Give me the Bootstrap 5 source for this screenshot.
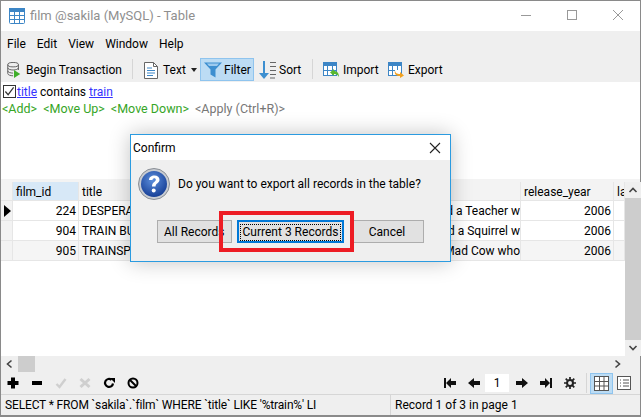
<!DOCTYPE html>
<html lang="en">
<head>
<meta charset="utf-8">
<title>film @sakila (MySQL) - Table</title>
<link href="https://cdn.jsdelivr.net/npm/bootstrap@5.3.0/dist/css/bootstrap.min.css" rel="stylesheet">
<style>
html,body{height:100%;}
body{font-family:Roboto,"Noto Sans",sans-serif;font-size:12px;line-height:16px;color:#000;background:#fff;overflow:hidden;}
.win{width:641px;height:417px;border:solid #8a8a8a;border-width:1px 1px 2px 1px;position:relative;}
.titlebar{height:30px;padding-left:8px;color:#8f8f8f;font-size:13px;flex:none;}
.ttl{margin-left:5px;}
.wbtn{width:46px;height:30px;padding:0 0 2px 2px;}
.chrome{background:#efefef;flex:none;}
.menubar{height:25px;padding-left:6px;gap:11px;padding-top:1px;}
.tbar{height:26px;}
.tb{height:23px;border:1px solid transparent;white-space:nowrap;flex:none;}
.tbar .tb{padding-top:2px;}
.tb.on{background:#bcdcf4;border-color:#8fc4ee;}
.vsep{width:1px;height:20px;background:#d6d6d6;flex:none;}
.t-begin{margin-left:4px;width:120px;gap:4px;}
.sep1{margin-left:7px;}
.t-text{margin-left:10px;width:57px;gap:5px;}
.caret-ic{margin-left:auto;margin-right:2px;}
.tbar .t-filter{width:54px;gap:2px;padding-left:3px;}
.tbar .t-sort{width:52px;gap:2px;padding-left:4px;}
.sep2{margin-left:6px;}
.t-import{margin-left:9px;width:65px;gap:4px;}
.t-export{margin-left:0;gap:4px;}
.i16{width:16px;height:16px;display:block;flex:none;}
.i14t{width:14px;height:17px;display:block;flex:none;}
.i18{width:18px;height:18px;display:block;flex:none;}
.filt{height:97px;flex:none;}
.chk{width:13px;height:13px;border:1px solid #333;background:#fff;margin:0 1px 0 2px;flex:none;}
.fl{height:17px;}
.fl1{height:18px;padding-top:1px;}
.fl2{gap:6px;padding-left:1px;padding-top:1px;font-size:12.5px;}
.lnk{color:#3333ff;text-decoration:underline;}
.grn{color:#36a526;}
.gry{color:#777;}
.gridwrap{height:177px;flex:none;}
.gridtop{height:3px;background:#f3f3f3;flex:none;}
.gridbody{flex:1 1 auto;min-height:0;}
.gridmain{width:624px;background:#fff;flex:none;}
.datagrid{display:grid;grid-template-columns:12px 66px 190px 252px 93px 11px;grid-template-rows:19px 20px 20px 20px;}
.datagrid > div{border-right:1px solid #e6e6e6;border-bottom:1px solid #e6e6e6;padding:0 3px;white-space:nowrap;overflow:hidden;display:flex;align-items:center;}
.datagrid .rh{background:#f3f3f3;padding:0 0 0 3px;}
.datagrid .hd{background:#f3f3f3;padding-top:1px;}
.datagrid .hd.act{background:#d7e8f7;}
.datagrid .num{justify-content:flex-end;padding-right:2px;}
.datagrid .rt{justify-content:flex-end;padding-right:0;}
.datagrid .alt{background:#f5f5f5;}
.arrow{width:0;height:0;border-left:7px solid #000;border-top:6px solid transparent;border-bottom:6px solid transparent;}
.vscroll{width:16px;background:#efefef;flex:none;}
.vbtn{height:16px;flex:none;}
.vthumb{background:#cdcdcd;height:142px;flex:none;}
.hscroll{height:16px;background:#efefef;flex:none;}
.hthumb{width:17px;height:16px;background:#cdcdcd;margin-left:1px;flex:none;}
.hright{width:14px;flex:none;}
.btools{height:22px;padding-left:5px;padding-right:9px;}
.ltools{gap:10px;}
.rtools{gap:12px;}
.ico{width:14px;height:14px;display:block;flex:none;}
.ico12{width:12px;height:14px;display:block;flex:none;}
.tighta{margin-right:-7px;}
.tightb{margin-right:-5px;}
.sepg{margin-left:-2px;}
.pagebox{width:24px;height:18px;background:#fff;text-align:center;line-height:18px;flex:none;}
.viewbtns{gap:4px;margin-left:-9px;}
.t-grid{width:23px;height:21px;}
.i15{width:15px;height:15px;display:block;flex:none;}
.status{height:21px;border-top:1px solid #d6d6d6;background:#efefef;flex:none;}
.sqlcell{width:390px;padding-left:4px;border-right:1px solid #d6d6d6;white-space:nowrap;overflow:hidden;height:20px;line-height:20px;letter-spacing:-.15px;}
.reccell{padding-left:4px;line-height:20px;}
.dlg{position:absolute;left:129px;top:133px;width:321px;height:128px;background:#efefef;border:1px solid #2b9be0;box-shadow:0 0 20px rgba(0,0,0,.24);}
.dlgtop{height:25px;background:#fff;padding:0 0 0 2px;}
.dlgx{margin-right:9px;}
.dlgq{padding:8px 0 0 7px;gap:8px;height:66px;}
.qicon{flex:none;}
.qtext{padding-top:8px;}
.dbtn{position:absolute;top:85px;height:23px;background:#e1e1e1;border:1px solid #adadad;text-align:center;line-height:20px;padding:0;color:#000;white-space:nowrap;}
.b-all{left:26px;width:75px;overflow:hidden;text-align:left;padding-left:6px;}
.b-cur{left:106px;width:107px;border:2px solid #0078d7;}
.b-cur span{display:block;margin:0 1px;border:1px dotted #000;height:17px;line-height:15px;margin-top:1px;}
.b-can{left:219px;width:74px;}
.redbox{position:absolute;left:88px;top:76px;width:135px;height:41px;border:4px solid #ed1c24;}
</style>
</head>
<body>
<div class="win d-flex flex-column">
  <div class="titlebar d-flex align-items-center">
    <svg class="i16" viewBox="0 0 16 16"><rect x=".5" y=".5" width="15" height="15" rx="1" fill="#fff" stroke="#3d86c6"/><rect width="16" height="4" fill="#3d86c6"/><path d="M5.500 4v12M10.500 4v12M0 7.500h16M0 11.500h16" stroke="#3d86c6" fill="none"/></svg>
    <span class="ttl flex-grow-1">film @sakila (MySQL) - Table</span>
    <div class="d-flex">
      <div class="wbtn d-flex align-items-center justify-content-center"><svg width="12" height="12" viewBox="0 0 12 12"><path d="M1 6.500h10" stroke="#999"/></svg></div>
      <div class="wbtn d-flex align-items-center justify-content-center"><svg width="12" height="12" viewBox="0 0 12 12"><rect x="1.500" y="1.500" width="9" height="9" fill="none" stroke="#999"/></svg></div>
      <div class="wbtn d-flex align-items-center justify-content-center"><svg width="12" height="12" viewBox="0 0 12 12"><path d="M1 1l10 10M11 1L1 11" stroke="#999"/></svg></div>
    </div>
  </div>
  <div class="chrome">
    <div class="menubar d-flex align-items-center"><span>File</span><span>Edit</span><span>View</span><span>Window</span><span>Help</span></div>
    <div class="tbar d-flex align-items-center">
      <div class="tb t-begin d-flex align-items-center">
        <svg class="i16" viewBox="0 0 16 18"><ellipse cx="7" cy="3" rx="6" ry="2.500" fill="#eee" stroke="#555"/><path d="M1 3v10c0 1.500 3 2.500 6 2.500M13 3v6M1 6.500c0 1.500 3 2.500 6 2.500s6-1 6-2.500M1 10c0 1.500 3 2.500 6 2.500" fill="none" stroke="#555"/><path d="M8 9l7 4.500L8 18z" fill="#3fae2a"/></svg>
        <span>Begin Transaction</span>
      </div>
      <div class="vsep sep1"></div>
      <div class="tb t-text d-flex align-items-center">
        <svg class="i14t" viewBox="0 0 14 17"><path d="M.5.500h9l4 4v12H.5z" fill="#fff" stroke="#666"/><path d="M9.500.500v4h4" fill="none" stroke="#666"/><path d="M3 6h5M3 8.500h8M3 11h8M3 13.500h6" stroke="#3d86c6"/></svg>
        <span>Text</span>
        <svg class="caret-ic" width="6" height="4" viewBox="0 0 6 4"><path d="M0 0h6L3 4z" fill="#222"/></svg>
      </div>
      <div class="tb on t-filter d-flex align-items-center">
        <svg class="i18" viewBox="0 0 18 17"><path d="M0 1h18l-6.500 7v8l-5-3V8z" fill="#3d8fd0"/><path d="M3 2h12l-2 2.500H5z" fill="#9ccaee"/></svg>
        <span>Filter</span>
      </div>
      <div class="tb t-sort d-flex align-items-center">
        <svg class="i18" viewBox="0 0 18 18"><path d="M5 0v13" stroke="#3d8fd0" stroke-width="2"/><path d="M0 12h10l-5 6z" fill="#3d8fd0"/><path d="M11 1.500h6M11 5.500h6M11 9.500h6M11 13.500h6M11 17h5" stroke="#666"/></svg>
        <span>Sort</span>
      </div>
      <div class="vsep sep2"></div>
      <div class="tb t-import d-flex align-items-center">
        <svg class="i16" viewBox="0 0 16 16"><rect x=".5" y=".5" width="13" height="13" fill="#fff" stroke="#3d86c6"/><rect width="14" height="4" fill="#3d86c6"/><path d="M4.500 4v10M9.500 4v10M0 8.500h14" stroke="#3d86c6"/><path d="M7 10.500l4-3.500v2c3 0 5 2 5 6-1-2-2.500-3-5-3v2z" fill="#58b82f"/></svg>
        <span>Import</span>
      </div>
      <div class="tb t-export d-flex align-items-center">
        <svg class="i16" viewBox="0 0 16 16"><rect x=".5" y=".5" width="13" height="13" fill="#fff" stroke="#3d86c6"/><rect width="14" height="4" fill="#3d86c6"/><path d="M7 8c0 3 2 4 5 4v-2l4 3.500-4 2.500v-2c-4 0-6-2-5-6z" fill="#f2a11f"/><path d="M4.500 4v10M9.500 4v4M0 8.500h7" stroke="#3d86c6"/></svg>
        <span>Export</span>
      </div>
    </div>
  </div>
  <div class="filt">
    <div class="fl fl1 d-flex align-items-center"><span class="chk d-flex align-items-center justify-content-center"><svg width="11" height="11" viewBox="0 0 12 12"><path d="M1.500 6l3 3.500 6-8" fill="none" stroke="#333" stroke-width="1.300"/></svg></span><span class="lnk">title</span><span>&nbsp;contains&nbsp;</span><span class="lnk">train</span></div>
    <div class="fl fl2 d-flex"><span class="grn">&lt;Add&gt;</span><span class="grn">&lt;Move Up&gt;</span><span class="grn">&lt;Move Down&gt;</span><span class="gry">&lt;Apply (Ctrl+R)&gt;</span></div>
  </div>
  <div class="gridwrap d-flex flex-column">
    <div class="gridtop"></div>
    <div class="gridbody d-flex">
      <div class="gridmain">
        <div class="datagrid">
          <div class="rh"></div><div class="hd act">film_id</div><div class="hd">title</div><div class="hd">description</div><div class="hd">release_year</div><div class="hd">la</div>
          <div class="rh"><span class="arrow"></span></div><div class="num">224</div><div>DESPERATE TRAINSPOTTING</div><div class="rt">A Epic Yarn of a Forensic Psychologist And a Teacher w</div><div class="num">2006</div><div></div>
          <div class="rh"></div><div class="num">904</div><div>TRAIN BUNCH</div><div class="rt">A Thrilling Character Study of a Robot And a Squirrel w</div><div class="num">2006</div><div></div>
          <div class="rh"></div><div class="num alt">905</div><div class="alt">TRAINSPOTTING</div><div class="rt alt">A Action-Packed Reflection of a Cat And a Mad Cow who</div><div class="num alt">2006</div><div class="alt"></div>
        </div>
      </div>
      <div class="vscroll d-flex flex-column">
        <div class="vbtn d-flex justify-content-center align-items-center"><svg width="10" height="8" viewBox="0 0 10 8"><path d="M1.500 6L5 2.500 8.500 6" fill="none" stroke="#444" stroke-width="1.600"/></svg></div>
        <div class="vthumb"></div>
        <div class="vbtn d-flex justify-content-center align-items-center"><svg width="10" height="8" viewBox="0 0 10 8"><path d="M1.500 2L5 5.500 8.500 2" fill="none" stroke="#444" stroke-width="1.600"/></svg></div>
      </div>
    </div>
  </div>
  <div class="hscroll d-flex align-items-center">
    <svg width="16" height="16" viewBox="0 0 16 16"><path d="M10.500 4.500L6.500 8l4 3.500" fill="none" stroke="#444" stroke-width="1.600"/></svg>
    <div class="hthumb"></div>
    <div class="flex-grow-1"></div>
    <svg width="16" height="16" viewBox="0 0 16 16"><path d="M5.500 4.500l4 3.500-4 3.500" fill="none" stroke="#444" stroke-width="1.600"/></svg>
    <div class="hright"></div>
  </div>
  <div class="btools chrome d-flex align-items-center">
    <div class="ltools d-flex align-items-center flex-grow-1">
      <svg class="ico" viewBox="0 0 14 14"><path d="M5 1.500h4v3.500h3.500v4H9v3.500H5V9H1.500V5H5z" fill="#000"/></svg>
      <svg class="ico" viewBox="0 0 14 14"><rect x="2" y="5" width="10" height="4" fill="#000"/></svg>
      <svg class="ico" viewBox="0 0 14 14"><path d="M2.500 8l3 3 6-8" fill="none" stroke="#cfcfcf" stroke-width="2.400"/></svg>
      <svg class="ico" viewBox="0 0 14 14"><path d="M2.500 3l9 8M11.500 3l-9 8" fill="none" stroke="#cfcfcf" stroke-width="3"/></svg>
      <svg class="ico" viewBox="0 0 14 14"><path d="M11 7.500A4 4 0 1 1 9.500 3.800" fill="none" stroke="#000" stroke-width="2.200"/><path d="M8 2h5v5z" fill="#000"/></svg>
      <svg class="ico" viewBox="0 0 14 14"><circle cx="7" cy="7" r="4.500" fill="none" stroke="#000" stroke-width="2"/><path d="M3.500 3.500l7 7" stroke="#000" stroke-width="2"/></svg>
    </div>
    <div class="rtools d-flex align-items-center">
      <svg class="ico12" viewBox="0 0 12 14"><path d="M0 2h2v10H0zM2 7l5-5v3h5v4H7v3z" fill="#111"/></svg>
      <svg class="ico12 tighta" viewBox="0 0 12 14"><path d="M0 7l6-5v3h6v4H6v3z" fill="#111"/></svg>
      <div class="pagebox tightb">1</div>
      <svg class="ico12" viewBox="0 0 12 14"><path d="M12 7L6 2v3H0v4h6v3z" fill="#111"/></svg>
      <svg class="ico12" viewBox="0 0 12 14"><path d="M12 2h-2v10h2zM10 7L5 2v3H0v4h5v3z" fill="#111"/></svg>
      <svg class="ico12" viewBox="0 0 14 14"><circle cx="7" cy="7" r="3.500" fill="none" stroke="#222" stroke-width="2.400"/><path d="M7 0v3M7 11v3M0 7h3M11 7h3M2 2l2 2M10 10l2 2M12 2l-2 2M4 10l-2 2" stroke="#222" stroke-width="2"/></svg>
      <div class="vsep sepg"></div>
      <div class="viewbtns d-flex align-items-center">
        <div class="tb on t-grid d-flex align-items-center justify-content-center"><svg class="i15" viewBox="0 0 15 15"><rect x=".5" y=".5" width="14" height="14" fill="#fff" stroke="#555"/><path d="M5.500 0v15M10 0v15M0 5.500h15M0 10h15" stroke="#555"/></svg></div>
        <svg class="ico" viewBox="0 0 14 14"><rect x=".5" y=".5" width="13" height="13" fill="#fff" stroke="#555"/><path d="M3 4h1M6 4h6M3 7h1M6 7h6M3 10h1M6 10h6" stroke="#555"/></svg>
      </div>
    </div>
  </div>
  <div class="status d-flex">
    <div class="sqlcell">SELECT * FROM `sakila`.`film` WHERE `title` LIKE '%train%' LI</div>
    <div class="reccell">Record 1 of 3 in page 1</div>
  </div>
  <div class="dlg">
    <div class="dlgtop d-flex align-items-center justify-content-between">
      <span>Confirm</span>
      <svg class="dlgx" width="12" height="12" viewBox="0 0 12 12"><path d="M1 1l10 10M11 1L1 11" stroke="#222" stroke-width="1.100"/></svg>
    </div>
    <div class="dlgq d-flex">
      <svg class="qicon" width="32" height="32" viewBox="0 0 32 32">
        <defs><radialGradient id="qb" cx="45%" cy="35%" r="70%"><stop offset="0" stop-color="#5d8fdc"/><stop offset="1" stop-color="#123a92"/></radialGradient></defs>
        <circle cx="16" cy="16" r="15.500" fill="#c8ccd2" stroke="#8a8f96"/><circle cx="16" cy="16" r="13" fill="url(#qb)"/>
        <path d="M11 12c0-3 2.500-4.500 5.500-4.500s5 1.800 5 4.300c0 3.500-4 3.500-4 6.700h-3.500c0-4.500 3.800-4.500 3.800-6.700 0-1-.6-1.500-1.500-1.500-1.200 0-1.800.8-1.800 1.700z" fill="#fff"/><circle cx="15.700" cy="22.500" r="2" fill="#fff"/>
      </svg>
      <div class="qtext">Do you want to export all records in the table?</div>
    </div>
    <button type="button" class="dbtn b-all">All Records</button>
    <button type="button" class="dbtn b-cur"><span>Current 3 Records</span></button>
    <button type="button" class="dbtn b-can">Cancel</button>
    <div class="redbox"></div>
  </div>
</div>
</body>
</html>
